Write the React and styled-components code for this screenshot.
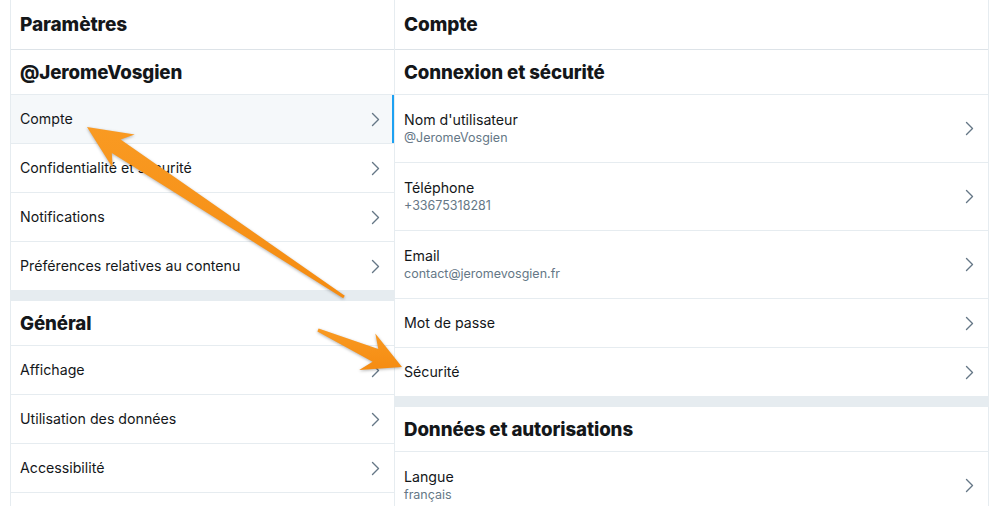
import React from 'react';
import styled, { createGlobalStyle } from 'styled-components';

const GlobalStyle = createGlobalStyle`
  body {
    margin: 0;
    background: #fff;
    font-family: Inter, "Noto Sans", "Liberation Sans", sans-serif;
    color: #14171a;
  }
`;

const Page = styled.div`
  position: relative;
  display: flex;
  height: 506px;
  padding-left: 10px;
  overflow: hidden;
  box-sizing: border-box;
`;

const Column = styled.section`
  width: ${(p) => p.width}px;
  flex-shrink: 0;
  border-left: ${(p) => (p.first ? '1px solid #e6ecf0' : 'none')};
  border-right: 1px solid #e6ecf0;
  box-sizing: border-box;
`;

const PageHeader = styled.h1`
  margin: 0;
  height: 50px;
  box-sizing: border-box;
  display: flex;
  align-items: center;
  padding: 0 9px;
  font-size: 19px;
  font-weight: 800;
  letter-spacing: -0.1px;
  border-bottom: 1px solid #dde3e8;
`;

const SectionTitle = styled.h2`
  margin: 0;
  height: 45px;
  box-sizing: border-box;
  display: flex;
  align-items: center;
  padding: 0 9px;
  font-size: 18.7px;
  font-weight: 800;
  letter-spacing: -0.1px;
  border-bottom: 1px solid #e6ecf0;
`;

const Row = styled.div`
  display: flex;
  align-items: center;
  justify-content: space-between;
  height: ${(p) => (p.tall ? 68 : 49)}px;
  box-sizing: border-box;
  padding: 0 14px 0 9px;
  border-bottom: 1px solid #e6ecf0;
  background: ${(p) => (p.active ? '#f5f8fa' : '#fff')};
  box-shadow: ${(p) => (p.active ? 'inset -2px 0 0 #1da1f2' : 'none')};
`;

const Labels = styled.div`
  display: flex;
  flex-direction: column;
  margin-top: ${(p) => (p.tall ? -2 : 0)}px;
`;

const Label = styled.span`
  font-size: 14.2px;
  line-height: 20px;
  color: #14171a;
`;

const SubLabel = styled.span`
  font-size: 12.5px;
  line-height: 16px;
  color: #657786;
`;

const Separator = styled.div`
  height: 10px;
  background: #e6ecf0;
`;

const Overlay = styled.svg`
  position: absolute;
  left: 0;
  top: 0;
  width: 1000px;
  height: 506px;
  pointer-events: none;
  filter: drop-shadow(0 1px 1.5px rgba(0, 0, 0, 0.3));
`;

const Chevron = () => (
  <svg width="9" height="15" viewBox="0 0 9 15" fill="none">
    <path d="M1.5 1.5l6 6-6 6" stroke="#657786" strokeWidth="1.4" strokeLinecap="round" strokeLinejoin="round" />
  </svg>
);

const Item = ({ label, sub, active }) => (
  <Row tall={!!sub} active={active}>
    <Labels tall={!!sub}>
      <Label>{label}</Label>
      {sub && <SubLabel>{sub}</SubLabel>}
    </Labels>
    <Chevron />
  </Row>
);

// tapered annotation arrow, tail -> tip
const arrowPoints = (tail, tip, headLen, headHalf, shaftHalf, tailHalf) => {
  const dx = tip[0] - tail[0];
  const dy = tip[1] - tail[1];
  const len = Math.hypot(dx, dy);
  const ux = dx / len;
  const uy = dy / len;
  const nx = -uy;
  const ny = ux;
  const base = [tip[0] - ux * headLen, tip[1] - uy * headLen];
  const neck = [tip[0] - ux * (headLen - 9), tip[1] - uy * (headLen - 9)];
  const pts = [
    [tail[0] + nx * tailHalf, tail[1] + ny * tailHalf],
    [neck[0] + nx * shaftHalf, neck[1] + ny * shaftHalf],
    [base[0] + nx * headHalf, base[1] + ny * headHalf],
    tip,
    [base[0] - nx * headHalf, base[1] - ny * headHalf],
    [neck[0] - nx * shaftHalf, neck[1] - ny * shaftHalf],
    [tail[0] - nx * tailHalf, tail[1] - ny * tailHalf],
  ];
  return pts.map((p) => p.map((v) => v.toFixed(1)).join(',')).join(' ');
};

const menu = [
  'Compte',
  'Confidentialité et sécurité',
  'Notifications',
  'Préférences relatives au contenu',
];

const general = ['Affichage', 'Utilisation des données', 'Accessibilité'];

const App = () => {
  return (
    <Page>
      <GlobalStyle />
      <Column first width={385}>
        <PageHeader>Paramètres</PageHeader>
        <SectionTitle>@JeromeVosgien</SectionTitle>
        {menu.map((label, i) => (
          <Item key={label} label={label} active={i === 0} />
        ))}
        <Separator />
        <SectionTitle>Général</SectionTitle>
        {general.map((label) => (
          <Item key={label} label={label} />
        ))}
      </Column>
      <Column width={594}>
        <PageHeader>Compte</PageHeader>
        <SectionTitle>Connexion et sécurité</SectionTitle>
        <Item label="Nom d'utilisateur" sub="@JeromeVosgien" />
        <Item label="Téléphone" sub="+33675318281" />
        <Item label="Email" sub="contact@jeromevosgien.fr" />
        <Item label="Mot de passe" />
        <Item label="Sécurité" />
        <Separator />
        <SectionTitle>Données et autorisations</SectionTitle>
        <Item label="Langue" sub="français" />
      </Column>
      <Overlay viewBox="0 0 1000 506">
        <defs>
          <linearGradient id="orange" x1="0" y1="0" x2="0" y2="1">
            <stop offset="0" stopColor="#f99a22" />
            <stop offset="1" stopColor="#f58c12" />
          </linearGradient>
        </defs>
        <polygon points={arrowPoints([344, 297], [87, 127], 44, 20, 8, 1.5)} fill="url(#orange)" />
        <polygon points={arrowPoints([318, 330], [402, 367], 38, 20, 7, 1.5)} fill="url(#orange)" />
      </Overlay>
    </Page>
  );
};

export default App;
